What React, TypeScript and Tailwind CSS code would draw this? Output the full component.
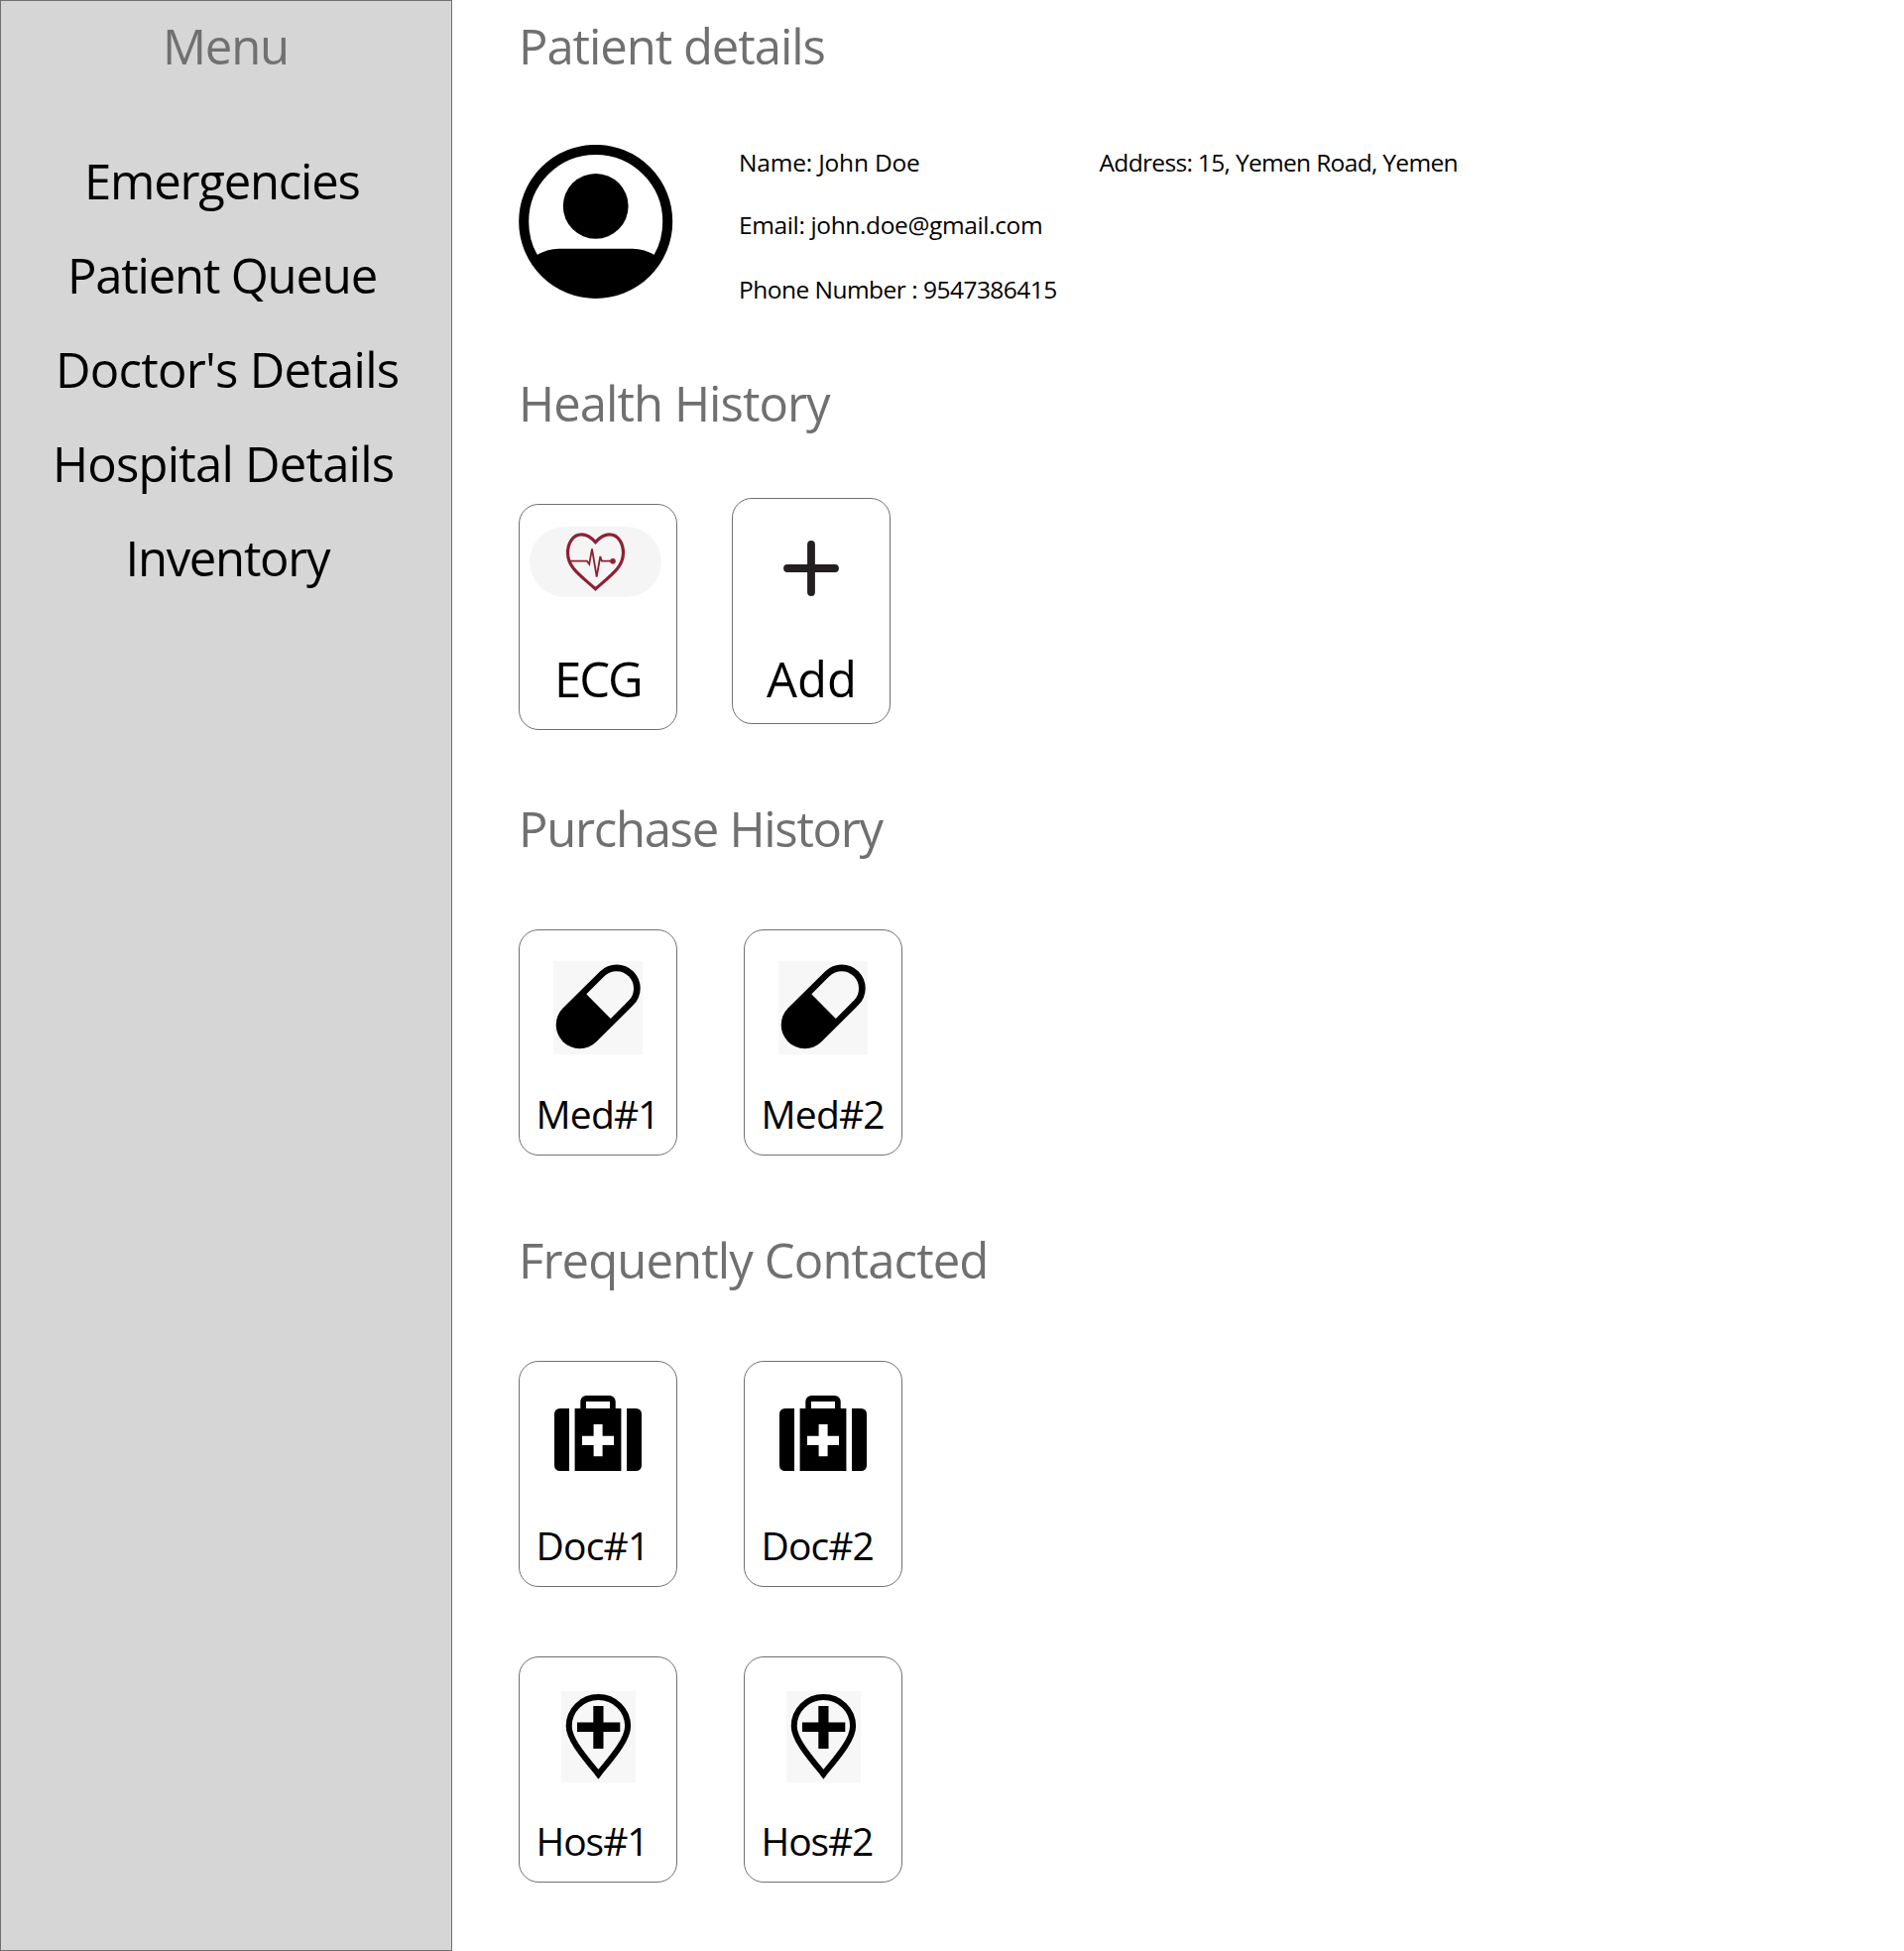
import type { ReactNode } from "react";

const menuItems = [
  { label: "Emergencies", className: "ml-[84px] tracking-[-1.22px]" },
  { label: "Patient Queue", className: "ml-[67px] tracking-[-1.2px]" },
  { label: "Doctor's Details", className: "ml-[55px] tracking-[-0.73px]" },
  { label: "Hospital Details", className: "ml-[52px] tracking-[-0.79px]" },
  { label: "Inventory", className: "ml-[125.5px] tracking-[-1.28px]" },
];

function Sidebar() {
  return (
    <aside className="w-[456px] shrink-0 border border-[#707070] bg-[#d6d6d6] pt-3 text-[49px] leading-[66px] whitespace-nowrap">
      <h1 className="ml-[163px] tracking-[-1.2px] text-[#707070]">Menu</h1>
      <nav className="mt-[70px] flex flex-col gap-[29px]">
        {menuItems.map((item) => (
          <a key={item.label} className={item.className}>
            {item.label}
          </a>
        ))}
      </nav>
    </aside>
  );
}

function Heading({ className, children }: { className: string; children: ReactNode }) {
  return (
    <h2 className={`text-[49px] leading-[66px] whitespace-nowrap text-[#707070] ${className}`}>
      {children}
    </h2>
  );
}

function Card({ className = "", children }: { className?: string; children: ReactNode }) {
  return (
    <article className={`flex h-[228px] w-[160px] shrink-0 flex-col rounded-[20px] border border-[#707070] bg-white ${className}`}>
      {children}
    </article>
  );
}

function SmallLabel({ className, children }: { className: string; children: ReactNode }) {
  return <p className={`ml-[16.5px] text-[39px] leading-[53px] whitespace-nowrap ${className}`}>{children}</p>;
}

function Avatar() {
  return (
    <svg width="156" height="156" viewBox="0 0 156 156" className="shrink-0">
      <circle cx="77.7" cy="77.4" r="72.5" fill="#fff" stroke="#000" strokeWidth="10" />
      <circle cx="77.7" cy="61.8" r="32.9" />
      <path d="M18.2 111.2C24 107.6 32 104.9 40.5 104.7H115C123.5 104.9 131.5 107.6 137.2 111.2L140.5 116A74 74 0 0 1 15 116Z" />
    </svg>
  );
}

function HeartIcon() {
  return (
    <svg width="133" height="71" viewBox="0 0 133 71" fill="none" stroke="#8e2035">
      <path
        strokeWidth="3.2"
        d="M66.5 15.6C61.5 10 56.5 7.8 52.5 7.8C43.5 7.8 38.5 17 38.5 26.5C38.5 41 51 49 66.5 62.8C82 49 94.5 41 94.5 26.5C94.5 17 89.5 7.8 80.5 7.8C76.5 7.8 71.5 10 66.5 15.6Z"
      />
      <path strokeWidth="1.8" d="M41 34.7H58L60.2 37.7L63 22.3L67.7 50.5L71.3 30L72.9 34.7H84" />
      <circle cx="84" cy="34.7" r="2.8" fill="#8e2035" stroke="none" />
    </svg>
  );
}

function PlusIcon() {
  return (
    <svg width="56" height="56" viewBox="0 0 56 56" stroke="#231f20" strokeWidth="7.8" strokeLinecap="round">
      <path d="M28 4V52M4 28H52" />
    </svg>
  );
}

function PillIcon() {
  return (
    <svg width="90" height="94" viewBox="0 0 90 94">
      <path d="M63.8 27.4L26.6 64.3" stroke="#000" strokeWidth="47.8" strokeLinecap="round" />
      <path d="M51.6 15A17.4 17.4 0 0 1 76.2 39.6L57.8 58L33.3 33.3Z" fill="#f7f7f7" />
    </svg>
  );
}

function MedkitIcon() {
  return (
    <svg width="88" height="76" viewBox="0 0 88 76">
      <path d="M15 13V76H5.5A5.5 5.5 0 0 1 0 70.5V18.5A5.5 5.5 0 0 1 5.5 13Z" />
      <path d="M73 13V76H82.5A5.5 5.5 0 0 0 88 70.5V18.5A5.5 5.5 0 0 0 82.5 13Z" />
      <path
        fillRule="evenodd"
        d="M20.6 13H26.3V6A6 6 0 0 1 32.3 0H55.7A6 6 0 0 1 61.7 6V13H67.4V76H20.6ZM32 6V13H56V6ZM39.6 29V40.8H28V50H39.6V61.3H48.6V50H60V40.8H48.6V29Z"
      />
    </svg>
  );
}

function HospitalPinIcon() {
  return (
    <svg width="75" height="92" viewBox="0 0 75 92">
      <path
        d="M37.4 83.8C27 70.5 7.7 50 7.7 35.2A29.7 29.2 0 0 1 67.1 35.2C67.1 50 47.8 70.5 37.4 83.8Z"
        fill="none"
        stroke="#000"
        strokeWidth="6"
      />
      <path d="M32.3 15H42.5V31.4H59.3V41H42.5V58H32.3V41H16V31.4H32.3Z" />
    </svg>
  );
}

function MedCard({ children }: { children: ReactNode }) {
  return (
    <Card>
      <div className="mt-[31px] ml-[34px] h-[94px] w-[90px] bg-[#f7f7f7]">
        <PillIcon />
      </div>
      <div className="mt-[33px]">{children}</div>
    </Card>
  );
}

function DoctorCard({ children }: { children: ReactNode }) {
  return (
    <Card>
      <div className="mt-[34px] ml-[35px] h-[76px]">
        <MedkitIcon />
      </div>
      <div className="mt-12">{children}</div>
    </Card>
  );
}

function HospitalCard({ children }: { children: ReactNode }) {
  return (
    <Card>
      <div className="mt-[34px] ml-[42px] h-[92px] w-[75px] bg-[#f7f7f7]">
        <HospitalPinIcon />
      </div>
      <div className="mt-8">{children}</div>
    </Card>
  );
}

export default function App() {
  return (
    <div className="flex h-[1967px] w-[1920px] overflow-hidden bg-white font-['Open_Sans',sans-serif] text-black">
      <Sidebar />
      <main className="flex-1 pt-[13px] pl-[67px]">
        <section>
          <Heading className="tracking-[-1.05px]">Patient details</Heading>
          <div className="mt-[67px] flex h-[156px] text-[24.5px] leading-[33px] whitespace-nowrap">
            <Avatar />
            <div className="mt-px ml-[66px] flex w-[363.5px] flex-col">
              <p className="tracking-[-0.19px]">Name: John Doe</p>
              <p className="mt-[30px] tracking-[-0.37px]">Email: john.doe@gmail.com</p>
              <p className="mt-8 tracking-[-0.52px]">Phone Number : 9547386415</p>
            </div>
            <p className="mt-px tracking-[-0.67px]">Address: 15, Yemen Road, Yemen</p>
          </div>
        </section>

        <section className="mt-[71px]">
          <Heading className="tracking-[-0.94px]">Health History</Heading>
          <div className="mt-[63px] flex items-start gap-[55px]">
            <Card className="mt-1.5">
              <div className="mt-[22px] ml-2.5 h-[71px] w-[133px] rounded-full bg-[#f5f5f5]">
                <HeartIcon />
              </div>
              <p className="mt-[49px] ml-[35px] text-[49px] leading-[66px] tracking-[-2.1px]">ECG</p>
            </Card>
            <Card>
              <div className="mt-[42px] ml-[51px] h-14">
                <PlusIcon />
              </div>
              <p className="mt-[50px] ml-[34px] text-[49px] leading-[66px]">Add</p>
            </Card>
          </div>
        </section>

        <section className="mt-[66px]">
          <Heading className="tracking-[-1.28px]">Purchase History</Heading>
          <div className="mt-[69px] flex gap-[67px]">
            <MedCard>
              <SmallLabel className="tracking-[-0.8px]">Med#1</SmallLabel>
            </MedCard>
            <MedCard>
              <SmallLabel className="tracking-[-0.8px]">Med#2</SmallLabel>
            </MedCard>
          </div>
        </section>

        <section className="mt-[72px]">
          <Heading className="tracking-[-0.88px]">Frequently Contacted</Heading>
          <div className="mt-[69px] flex gap-[67px]">
            <DoctorCard>
              <SmallLabel className="tracking-[-0.8px]">Doc#1</SmallLabel>
            </DoctorCard>
            <DoctorCard>
              <SmallLabel className="tracking-[-0.9px]">Doc#2</SmallLabel>
            </DoctorCard>
          </div>
          <div className="mt-[70px] flex gap-[67px]">
            <HospitalCard>
              <SmallLabel className="tracking-[-1.05px]">Hos#1</SmallLabel>
            </HospitalCard>
            <HospitalCard>
              <SmallLabel className="tracking-[-1.1px]">Hos#2</SmallLabel>
            </HospitalCard>
          </div>
        </section>
      </main>
    </div>
  );
}
